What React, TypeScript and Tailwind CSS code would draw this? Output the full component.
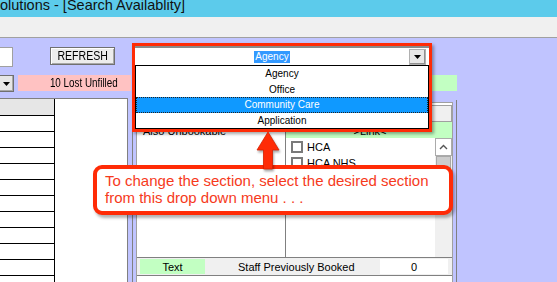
import React from "react";

function TriDown({ w = 7, h = 4 }: { w?: number; h?: number }) {
  return (
    <svg width={w} height={h} viewBox={`0 0 ${w} ${h}`}>
      <polygon points={`0,0 ${w},0 ${w / 2},${h}`} fill="#000" />
    </svg>
  );
}

export default function App() {
  const rows = Array.from({ length: 10 });
  return (
    <div className="relative w-[557px] h-[282px] overflow-hidden bg-[#C0C4FF] font-['Liberation_Sans',Arial,sans-serif] text-black">
      {/* title bar */}
      <div className="h-[17px] bg-[#5CCBEB] overflow-hidden">
        <div className="text-[14.5px] leading-[15px] mt-[-2px] text-[#111] whitespace-nowrap">
          olutions - [Search Availablity]
        </div>
      </div>
      {/* menu bar */}
      <div className="h-[21px] bg-[#F0F0F0] border-b border-[#A0A0A0]" />

      {/* row 1 */}
      <div className="flex items-start pt-[9px] h-[29px]">
        <div className="w-[13px] h-[20px] bg-white border border-l-0 border-[#A0A0A0]" />
        <div className="ml-[37px] w-[65px] h-[18px] border border-[#707070] bg-[#EDEDED] shadow-[inset_1px_1px_0_#ffffff,inset_-1px_-1px_0_#A8A8A8] flex items-center justify-center text-[12px] leading-none">
          <span className="inline-block scale-x-[0.88]">REFRESH</span>
        </div>
      </div>

      {/* row 2 */}
      <div className="flex items-start h-[17px] mt-[8px]">
        <div className="w-[14px] h-[17px] border border-l-0 border-[#707070] bg-[#E6E6E6] shadow-[inset_-1px_-1px_0_#A8A8A8] flex items-center justify-center">
          <TriDown />
        </div>
        <div className="ml-[4px] w-[113px] h-[16px] bg-[#FFC2C2] flex items-center justify-end pr-[13px] text-[12px] leading-none whitespace-nowrap">
          <span className="inline-block origin-right scale-x-[0.82]">10 Lost Unfilled</span>
        </div>
        <div className="ml-[1px] w-[325px] h-[16px] bg-[#C2FFC2]" />
      </div>

      {/* row 3 */}
      <div className="flex mt-[6px] h-[184px]">
        {/* left table */}
        <div className="w-[128px] border-t border-r border-[#808080] flex bg-white">
          <div className="w-[55px] border-r border-black">
            <div className="h-[17px] bg-[#E6E6E6] border-b border-black" />
            {rows.map((_, i) => (
              <div key={i} className="h-[16px] border-b border-black" />
            ))}
          </div>
          <div className="flex-1 bg-white" />
        </div>
        <div className="w-[4px]" />
        {/* main panel */}
        <div className="w-[325px] mt-[2px] border-l border-r border-[#808080] px-[3px] pt-[2px] flex">
          <div className="flex-1 border border-b-0 border-[#A0A0A0] bg-white flex flex-col">
            <div className="mt-[2px] h-[17px] border border-[#A0A0A0] bg-[#F0F0F0]" />
            <div className="flex h-[135px]">
              <div className="w-[149px] border-r border-[#808080] pt-[3px] pl-[6px] text-[11px] leading-[13px] whitespace-nowrap">
                Also Unbookable
              </div>
              <div className="flex-1 flex flex-col">
                <div className="h-[16px] bg-[#C2FFC2] flex items-end justify-center text-[11px] leading-[13px] pl-[2px]">
                  &gt;Link&lt;
                </div>
                <div className="flex flex-1">
                  <div className="flex-1 pl-[5px] pt-[1px]">
                    {["HCA", "HCA NHS"].map((t) => (
                      <div key={t} className="h-[16px] flex items-center gap-[4px] text-[11px]">
                        <div className="w-[12px] h-[12px] border-2 border-[#7A7A7A] bg-white" />
                        <span>{t}</span>
                      </div>
                    ))}
                  </div>
                  <div className="w-[17px] bg-[#F0F0F0] flex flex-col">
                    <div className="h-[18px] bg-white border border-[#ABABAB] flex items-center justify-center">
                      <svg width="9" height="6" viewBox="0 0 9 6">
                        <polyline points="1,5 4.5,1.5 8,5" fill="none" stroke="#555" strokeWidth="1.4" />
                      </svg>
                    </div>
                    <div className="mx-[1px] h-[30px] bg-[#CDCDCD] border border-[#A8A8A8] flex flex-col items-center justify-center gap-[2px]">
                      <div className="w-[7px] h-[1px] bg-[#555]" />
                      <div className="w-[7px] h-[1px] bg-[#555]" />
                      <div className="w-[7px] h-[1px] bg-[#555]" />
                    </div>
                  </div>
                </div>
              </div>
            </div>
            <div className="h-[19px] border-t border-b border-[#808080] bg-[#F0F0F0] flex items-center text-[11px] leading-[16px]">
              <div className="ml-[3px] w-[65px] h-[15px] bg-[#C2FFC2] flex items-center justify-center">Text</div>
              <div className="ml-[33px] w-[142px] whitespace-nowrap">Staff Previously Booked</div>
              <div className="w-[68px] h-[15px] bg-white flex items-center justify-center">0</div>
            </div>
            <div className="flex-1 bg-white" />
          </div>
        </div>
        <div className="flex-1" />
      </div>

      {/* dropdown overlay with red highlight */}
      <div className="absolute left-[132px] top-[43px] w-[300px] h-[89px] border-[3px] border-[#FF2B06] bg-white shadow-[2px_2px_3px_rgba(0,0,0,0.35)] flex flex-col">
        <div className="h-[19px] bg-white border-t-2 border-[#8A8A8A] flex items-center relative">
          <div className="flex-1 flex justify-center">
            <span className="bg-[#3399FF] text-white text-[10px] leading-[12px] px-[1px]">Agency</span>
          </div>
          <div className="w-[17px] h-[16px] mr-[3px] bg-[#E8E8E8] border border-[#B0B0B0] shadow-[inset_-1px_-1px_0_#909090] flex items-center justify-center">
            <TriDown />
          </div>
        </div>
        <div className="flex-1 border border-black text-[10px] text-center">
          <div className="h-[16px] leading-[16px]">Agency</div>
          <div className="h-[15px] leading-[15px]">Office</div>
          <div className="h-[16px] leading-[16px] bg-[#0F99FF] text-white outline-1 outline-dotted outline-[#222] -outline-offset-1">Community Care</div>
          <div className="h-[15px] leading-[15px]">Application</div>
        </div>
      </div>

      {/* callout */}
      <div className="absolute left-[93px] top-[165px] w-[360px] h-[50px] border-4 border-[#FF2B06] rounded-[9px] bg-white shadow-[2px_3px_3px_rgba(0,0,0,0.3)] pl-[8px] pt-[3px] text-[15px] leading-[17px] text-[#F63A1C] font-['Liberation_Sans',Helvetica,sans-serif] whitespace-nowrap">
        <div>To change the section, select the desired section</div>
        <div>from this drop down menu . . .</div>
      </div>

      {/* arrow */}
      <svg
        className="absolute left-[255px] top-[130px] drop-shadow-[1px_2px_1px_rgba(0,0,0,0.35)]"
        width="26"
        height="40"
        viewBox="0 0 26 40"
      >
        <polygon
          points="13,2 24,20 17.5,20 17.5,39 8.5,39 8.5,20 2,20"
          fill="#FF2B06"
          stroke="#D42000"
          strokeWidth="0.8"
          strokeLinejoin="round"
        />
      </svg>
    </div>
  );
}
